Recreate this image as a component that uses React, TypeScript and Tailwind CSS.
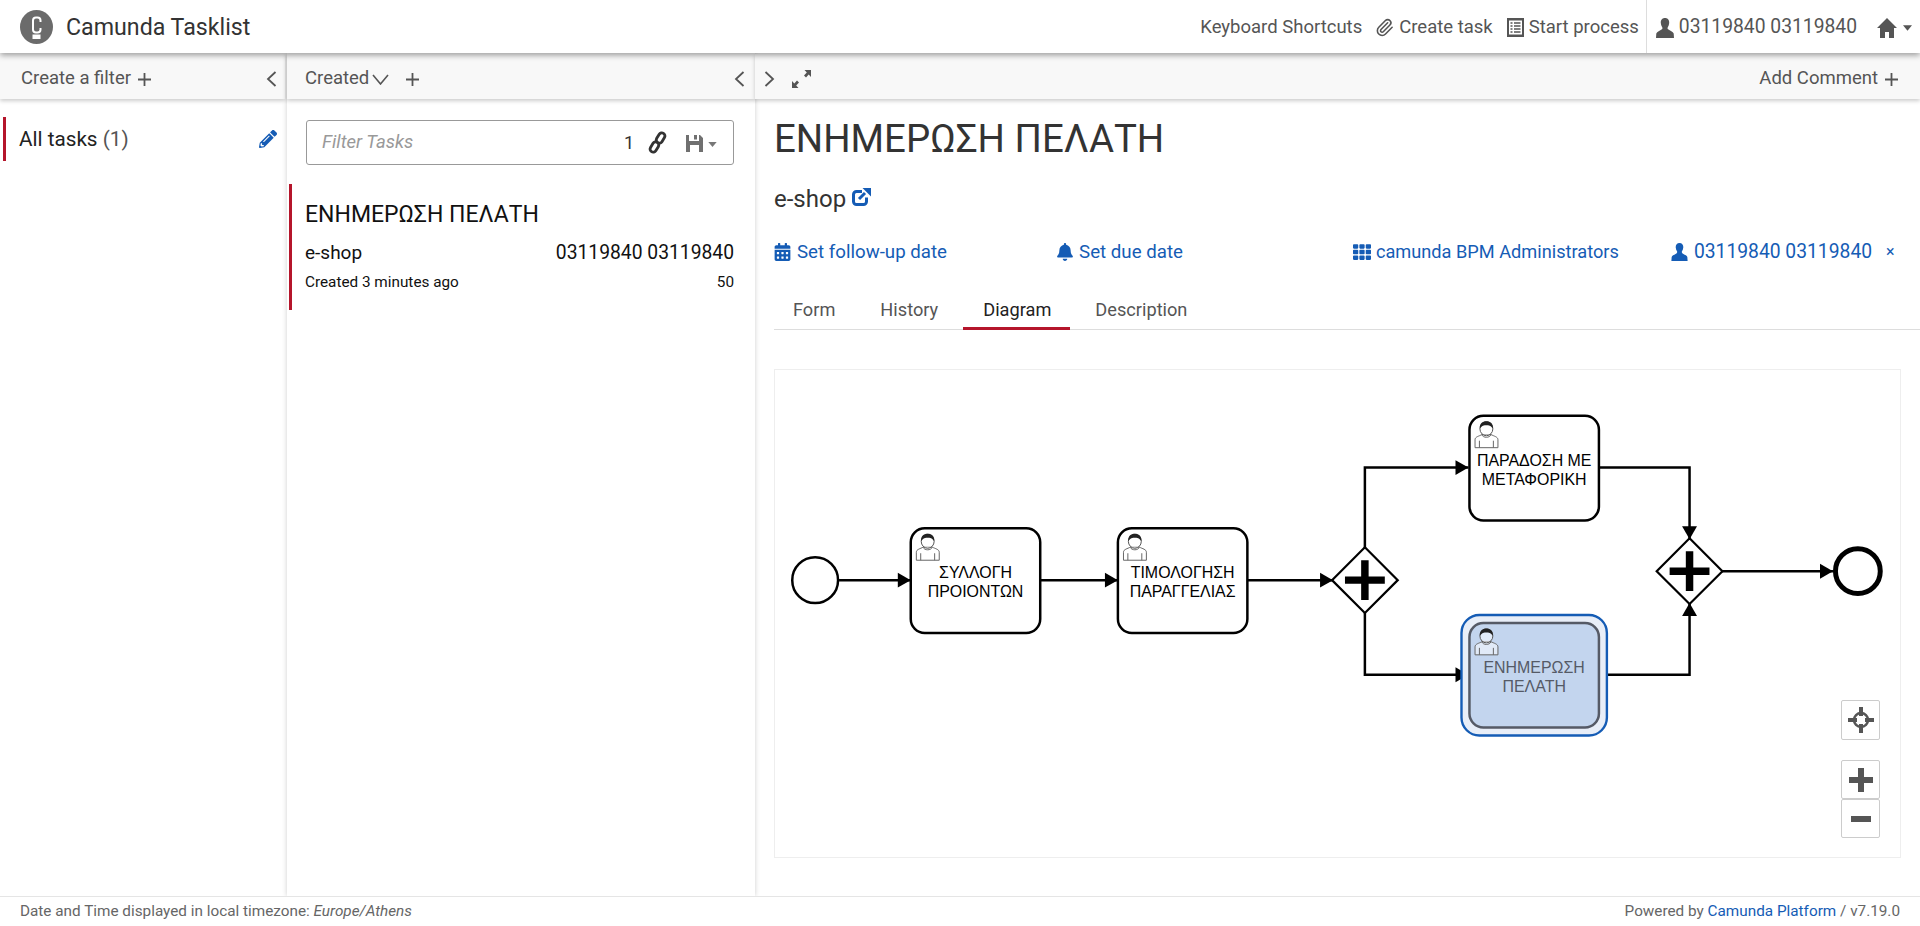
import { FaBell, FaCalendarAlt, FaPencilAlt, FaTh } from 'react-icons/fa'
import { Paperclip } from 'lucide-react'

const UserGlyph = ({ className }: { className: string }) => (
  <svg viewBox="0 0 18 20" className={className} fill="currentColor">
    <path d="M9 0C6 0 4.600 2.200 4.800 5c.1 1.600.6 3 1.400 4.200.4.6.3 1.600-.3 2.100C4 12.800 1 13.500.3 15.500L0 20h18l-.3-4.500c-.7-2-3.700-2.700-5.600-4.200-.6-.5-.7-1.500-.3-2.100.8-1.200 1.300-2.600 1.400-4.200C13.400 2.200 12 0 9 0z" />
  </svg>
)

const HomeGlyph = ({ className }: { className: string }) => (
  <svg viewBox="0 0 20 20" className={className} fill="currentColor">
    <path d="M10 0l10 10h-3v10h-5v-6H8v6H3V10H0z" />
  </svg>
)

const ListGlyph = ({ className }: { className: string }) => (
  <svg viewBox="0 0 17 19" className={className}>
    <rect width="17" height="19" fill="currentColor" />
    <rect x="2" y="2.500" width="13" height="14" fill="#fff" />
    <path d="M3.500 5h2M7 5h6.500M3.500 8h2M7 8h6.500M3.500 11h2M7 11h6.500M3.500 14h2M7 14h6.500" stroke="currentColor" strokeWidth="1.500" />
  </svg>
)

const LinkGlyph = ({ className }: { className: string }) => (
  <svg viewBox="0 0 20 24" className={className} fill="none" stroke="currentColor" strokeWidth="3">
    <rect x="10" y="1.500" width="6.500" height="11.500" rx="3.250" transform="rotate(32 13.250 7.250)" />
    <rect x="3.500" y="11" width="6.500" height="11.500" rx="3.250" transform="rotate(32 6.750 16.750)" />
  </svg>
)

const SaveGlyph = ({ className }: { className: string }) => (
  <svg viewBox="0 0 17 18" className={className} fill="currentColor">
    <path fillRule="evenodd" d="M0 1h3v6h10V1h1l3 3v14H0zM4 11v7h9v-7zM8 1h3v4.500H8z" />
  </svg>
)

const ShareGlyph = ({ className }: { className: string }) => (
  <svg viewBox="0 0 19 19" className={className} fill="none" stroke="currentColor">
    <path d="M10 3.500H4.500a3 3 0 0 0-3 3v7a3 3 0 0 0 3 3h7a3 3 0 0 0 3-3v-4" strokeWidth="3" />
    <path d="M7 11l6-6" strokeWidth="3" />
    <path d="M10.500 0H19v8.500z" fill="currentColor" stroke="none" />
  </svg>
)

const Logo = () => (
  <svg viewBox="0 0 33 34" className="h-[34px] w-[33px]">
    <ellipse cx="16.500" cy="17" rx="16.500" ry="17" fill="#6b6b6b" />
    <path d="M20.500 12v-1.500a3 3 0 0 0-3-3h-1.500a3 3 0 0 0-3 3v9a3 3 0 0 0 3 3h1.500a3 3 0 0 0 3-3V18" fill="none" stroke="#fff" strokeWidth="2" />
    <rect x="12.500" y="24.500" width="8" height="4.500" fill="#fff" />
  </svg>
)

const Chevron = ({ dir }: { dir: 'left' | 'right' | 'down' }) => {
  if (dir === 'down') {
    return (
      <svg viewBox="0 0 17 11" className="h-[11px] w-[17px]" fill="none" stroke="currentColor" strokeWidth="1.600">
        <path d="M1 1l7.500 9L16 1" />
      </svg>
    )
  }
  return (
    <svg viewBox="0 0 11 16" className="h-[16px] w-[11px]" fill="none" stroke="currentColor" strokeWidth="1.800">
      <path d={dir === 'left' ? 'M9.500 1L2 8l7.500 7' : 'M1.500 1L9 8l-7.500 7'} />
    </svg>
  )
}

const Plus = () => (
  <svg viewBox="0 0 13 13" className="h-[13px] w-[13px]" stroke="currentColor" strokeWidth="1.800">
    <path d="M6.500 0v13M0 6.500h13" />
  </svg>
)

const Expand = () => (
  <svg viewBox="0 0 19 18" className="h-[18px] w-[19px]" fill="currentColor">
    <path d="M19 0v7l-2.300-2.400-2.700 2.800-2-2 2.800-2.800L12.500 0zM0 18v-7l2.300 2.400 2.700-2.800 2 2-2.800 2.800 2.300 2.600z" />
  </svg>
)

const Caret = ({ className }: { className: string }) => (
  <svg viewBox="0 0 10 6" className={className} fill="currentColor">
    <path d="M0 0h10L5 6z" />
  </svg>
)

// bpmn-js style user task marker, 24x27
const Person = ({ x, y }: { x: number; y: number }) => (
  <g transform={`translate(${x} ${y})`}>
    <path d="M.6 27v-8c0-3 4-3.500 7-5.200h9c3 1.700 7 2.200 7 5.200v8z" fill="#fff" fillOpacity="0.5" stroke="#666" strokeWidth="1" />
    <path d="M5 20v7M19 20v7M7.500 14c1 3.400 8 3.400 9 0" fill="none" stroke="#666" strokeWidth="1" />
    <ellipse cx="12" cy="8" rx="6.500" ry="7" fill="#fff" fillOpacity="0.5" stroke="#555" strokeWidth="1" />
    <path d="M5.500 8C5 2.500 8 .5 12 .5S19 2.500 18.500 8C17 5 14 4.500 12 4.500S7 5 5.500 8z" fill="#222" />
  </g>
)

const Task = ({ x, y, lines, active }: { x: number; y: number; lines: string[]; active?: boolean }) => {
  const ink = active ? '#555a66' : '#000'
  const cx = x + 65
  return (
    <g>
      {active && <rect x={x - 8} y={y - 8} width={146} height={121} rx={18} fill="#e8eef8" stroke="#155cb5" strokeWidth="2.400" />}
      <rect x={x} y={y} width={130} height={105} rx={14} fill={active ? '#c3d5ee' : '#fff'} stroke={ink} strokeWidth="2.500" />
      <Person x={x + 5} y={y + 5} />
      {lines.map((line, i) => (
        <text key={line} x={cx} y={y + 50 + i * 19} textAnchor="middle" fontSize="16" fill={ink} fontFamily="Liberation Sans, sans-serif">
          {line}
        </text>
      ))}
    </g>
  )
}

const Gateway = ({ cx, cy }: { cx: number; cy: number }) => (
  <g transform={`translate(${cx} ${cy})`}>
    <path d="M0-33L33 0 0 33-33 0z" fill="#fff" stroke="#000" strokeWidth="2.200" />
    <path d="M-20 0h40M0-20v40" stroke="#000" strokeWidth="7.500" />
  </g>
)

const Arrow = ({ x, y, dir }: { x: number; y: number; dir: 'right' | 'down' | 'up' }) => {
  const d = {
    right: `M${x} ${y}l-13-7.500v15z`,
    down: `M${x} ${y}l-7.500-13h15z`,
    up: `M${x} ${y}l-7.500 13h15z`,
  }[dir]
  return <path d={d} fill="#000" />
}

// Process diagram, drawn in page pixels minus the canvas origin
const Diagram = () => (
  <svg viewBox="775 369 1127 489" className="block h-full w-full">
    <g fill="none" stroke="#000" strokeWidth="2.500">
      <path d="M838 580H910M1040 580H1118M1248 580H1334" />
      <path d="M1366 548V467H1470M1366 613V675H1470" />
      <path d="M1601 467H1692V539M1601 675H1692V603M1724 571H1836" />
    </g>
    <circle cx="814" cy="580" r="23" fill="#fff" stroke="#000" strokeWidth="2.500" />
    <circle cx="1861" cy="571" r="22.500" fill="#fff" stroke="#000" strokeWidth="5" />
    <Arrow x={1470} y={675} dir="right" />
    <Task x={910} y={528} lines={['ΣΥΛΛΟΓΗ', 'ΠΡΟΙΟΝΤΩΝ']} />
    <Task x={1118} y={528} lines={['ΤΙΜΟΛΟΓΗΣΗ', 'ΠΑΡΑΓΓΕΛΙΑΣ']} />
    <Task x={1471} y={415} lines={['ΠΑΡΑΔΟΣΗ ΜΕ', 'ΜΕΤΑΦΟΡΙΚΗ']} />
    <Gateway cx={1366} cy={580} />
    <Gateway cx={1692} cy={571} />
    <Task x={1471} y={623} lines={['ΕΝΗΜΕΡΩΣΗ', 'ΠΕΛΑΤΗ']} active />
    <Arrow x={910} y={580} dir="right" />
    <Arrow x={1118} y={580} dir="right" />
    <Arrow x={1334} y={580} dir="right" />
    <Arrow x={1470} y={467} dir="right" />
    <Arrow x={1692} y={539} dir="down" />
    <Arrow x={1692} y={603} dir="up" />
    <Arrow x={1836} y={571} dir="right" />
  </svg>
)

const ZoomControls = () => (
  <div className="absolute bottom-[19px] right-[20px] flex w-[39px] flex-col text-[#555]">
    <button className="mb-[20px] flex h-[40px] items-center justify-center rounded-[2px] border border-[#ccc] bg-white">
      <svg viewBox="0 0 26 26" className="h-[26px] w-[26px]" fill="none" stroke="currentColor">
        <circle cx="13" cy="13" r="7" strokeWidth="2.500" />
        <path d="M13 0v9M13 17v9M0 13h9M17 13h9" strokeWidth="4" />
      </svg>
    </button>
    <button className="flex h-[39px] items-center justify-center rounded-[2px] border border-[#ccc] bg-white">
      <svg viewBox="0 0 24 24" className="h-[24px] w-[24px]" stroke="currentColor" strokeWidth="6">
        <path d="M12 0v24M0 12h24" />
      </svg>
    </button>
    <button className="flex h-[39px] items-center justify-center rounded-[2px] border border-[#ccc] bg-white">
      <span className="h-[6px] w-[20px] bg-[#555]" />
    </button>
  </div>
)

const Toolbar = ({ children, className }: { children: React.ReactNode; className: string }) => (
  <div className={`mt-px flex h-[45px] shrink-0 items-center bg-[#f8f8f8] pt-[5px] text-[18.500px] text-[#555] shadow-[0_2px_4px_rgba(0,0,0,0.2)] ${className}`}>
    {children}
  </div>
)

export default function App() {
  return (
    <div className="flex h-[926px] w-[1920px] flex-col overflow-hidden bg-white font-[Roboto,sans-serif] text-[#333]">
      {/* Top bar */}
      <header className="relative z-20 flex h-[53px] shrink-0 items-center bg-white pl-[20px] shadow-[0_2px_6px_rgba(0,0,0,0.4)]">
        <Logo />
        <span className="ml-[13px] pt-[2px] text-[23.200px] text-[#333]">Camunda Tasklist</span>
        <nav className="ml-auto flex h-full items-center whitespace-nowrap pt-[2px] text-[18.500px] text-[#555]">
          <span>Keyboard Shortcuts</span>
          <Paperclip className="ml-[13px] mr-[5px] h-[19px] w-[19px]" strokeWidth={2} />
          <span>Create task</span>
          <ListGlyph className="ml-[14px] mr-[5px] h-[19px] w-[17px]" />
          <span>Start process</span>
          <span className="ml-[7px] mr-[9px] -mt-[2px] h-[53px] w-px bg-[#ddd]" />
          <UserGlyph className="h-[20px] w-[18px]" />
          <span className="ml-[5px] text-[19.300px]">03119840 03119840</span>
          <HomeGlyph className="ml-[20px] h-[20px] w-[20px]" />
          <Caret className="ml-[6px] mr-[8px] h-[6px] w-[9px]" />
        </nav>
      </header>

      <div className="flex min-h-0 flex-1">
        {/* Filters */}
        <aside className="flex w-[287px] shrink-0 flex-col">
          <Toolbar className="mr-[2px] pl-[21px] pr-[8px]">
            <span>Create a filter</span>
            <span className="ml-[7px]"><Plus /></span>
            <span className="ml-auto"><Chevron dir="left" /></span>
          </Toolbar>
          <div className="mt-[18px] ml-[3px] flex h-[44px] items-center border-l-[3px] border-[#b5152b] pl-[13px] pr-[10px]">
            <span className="pt-[2px] text-[20.700px] text-[#222]">All tasks <span className="text-[#555]">(1)</span></span>
            <FaPencilAlt className="ml-auto h-[18px] w-[18px] text-[#155cb5]" />
          </div>
        </aside>

        {/* Task list */}
        <section className="flex w-[468px] shrink-0 flex-col shadow-[0_0_5px_rgba(0,0,0,0.2)]">
          <Toolbar className="pl-[18px] pr-[10px]">
            <span>Created</span>
            <span className="ml-[3px]"><Chevron dir="down" /></span>
            <span className="ml-[17px]"><Plus /></span>
            <span className="ml-auto"><Chevron dir="left" /></span>
          </Toolbar>
          <div className="ml-[19px] mr-[21px] mt-[21px] flex h-[45px] items-center rounded-[3px] border border-[#999] pl-[15px] pr-[16px]">
            <span className="text-[18.500px] italic text-[#999]">Filter Tasks</span>
            <span className="ml-auto text-[18px]">1</span>
            <LinkGlyph className="ml-[14px] h-[23px] w-[19px]" />
            <SaveGlyph className="ml-[19px] h-[18px] w-[17px] text-[#707070]" />
            <Caret className="ml-[5px] mt-[4px] h-[5px] w-[9px] text-[#777]" />
          </div>
          <article className="ml-[2px] mt-[19px] flex h-[126px] flex-col border-l-[3px] border-[#b5152b] pl-[13px] pr-[21px] pt-[18px]">
            <h3 className="text-[23px] leading-[26px] text-[#111]">ΕΝΗΜΕΡΩΣΗ ΠΕΛΑΤΗ</h3>
            <div className="mt-[13px] flex items-baseline justify-between text-[19px] leading-[24px] text-[#111]">
              <span>e-shop</span>
              <span className="text-[19.300px]">03119840 03119840</span>
            </div>
            <div className="mt-[7px] flex justify-between text-[15.300px] leading-[20px] text-[#111]">
              <span>Created 3 minutes ago</span>
              <span>50</span>
            </div>
          </article>
        </section>

        {/* Task detail */}
        <main className="flex min-w-0 flex-1 flex-col">
          <Toolbar className="pl-[9px] pr-[22px]">
            <Chevron dir="right" />
            <span className="ml-[17px]"><Expand /></span>
            <span className="ml-auto">Add Comment</span>
            <span className="ml-[7px]"><Plus /></span>
          </Toolbar>
          <div className="flex min-h-0 flex-1 flex-col pl-[19px]">
            <h1 className="mt-[17px] text-[38.400px] leading-[46px] text-[#333]">ΕΝΗΜΕΡΩΣΗ ΠΕΛΑΤΗ</h1>
            <div className="mt-[23px] flex items-center text-[24px] leading-[28px]">
              <span>e-shop</span>
              <ShareGlyph className="ml-[6px] mt-[-4px] h-[19px] w-[19px] text-[#155cb5]" />
            </div>
            <div className="mt-[27px] flex h-[24px] items-center whitespace-nowrap text-[18.700px] text-[#155cb5]">
              <FaCalendarAlt className="h-[18px] w-[17px]" />
              <span className="ml-[6px]">Set follow-up date</span>
              <FaBell className="ml-[110px] h-[18px] w-[16px]" />
              <span className="ml-[6px]">Set due date</span>
              <FaTh className="ml-[170px] h-[18px] w-[18px]" />
              <span className="ml-[5px] text-[18.200px]">camunda BPM Administrators</span>
              <UserGlyph className="ml-[52px] h-[18px] w-[17px]" />
              <span className="ml-[6px] text-[19.300px]">03119840 03119840</span>
              <span className="ml-[14px] text-[16px]">×</span>
            </div>
            <nav className="mt-[26px] flex h-[40px] items-stretch border-b border-[#ddd] text-[18.200px] text-[#555]">
              <span className="flex items-center pl-[19px] pr-[21px]">Form</span>
              <span className="flex items-center pl-[24px] pr-[25px]">History</span>
              <span className="-mb-px flex items-center border-b-[3px] border-[#b5152b] pl-[20px] pr-[19px] pt-[3px] text-[#222]">Diagram</span>
              <span className="flex items-center pl-[25px] pr-[24px]">Description</span>
            </nav>
            <div className="relative mt-[39px] h-[489px] w-[1127px] border border-[#eee]">
              <Diagram />
              <ZoomControls />
            </div>
          </div>
        </main>
      </div>

      {/* Footer */}
      <footer className="relative z-10 flex h-[30px] shrink-0 items-center justify-between border-t border-[#e5e5e5] bg-white px-[20px] text-[15.300px] text-[#666]">
        <span>Date and Time displayed in local timezone: <em>Europe/Athens</em></span>
        <span>Powered by <span className="text-[#155cb5]">Camunda Platform</span> / v7.19.0</span>
      </footer>
    </div>
  )
}
